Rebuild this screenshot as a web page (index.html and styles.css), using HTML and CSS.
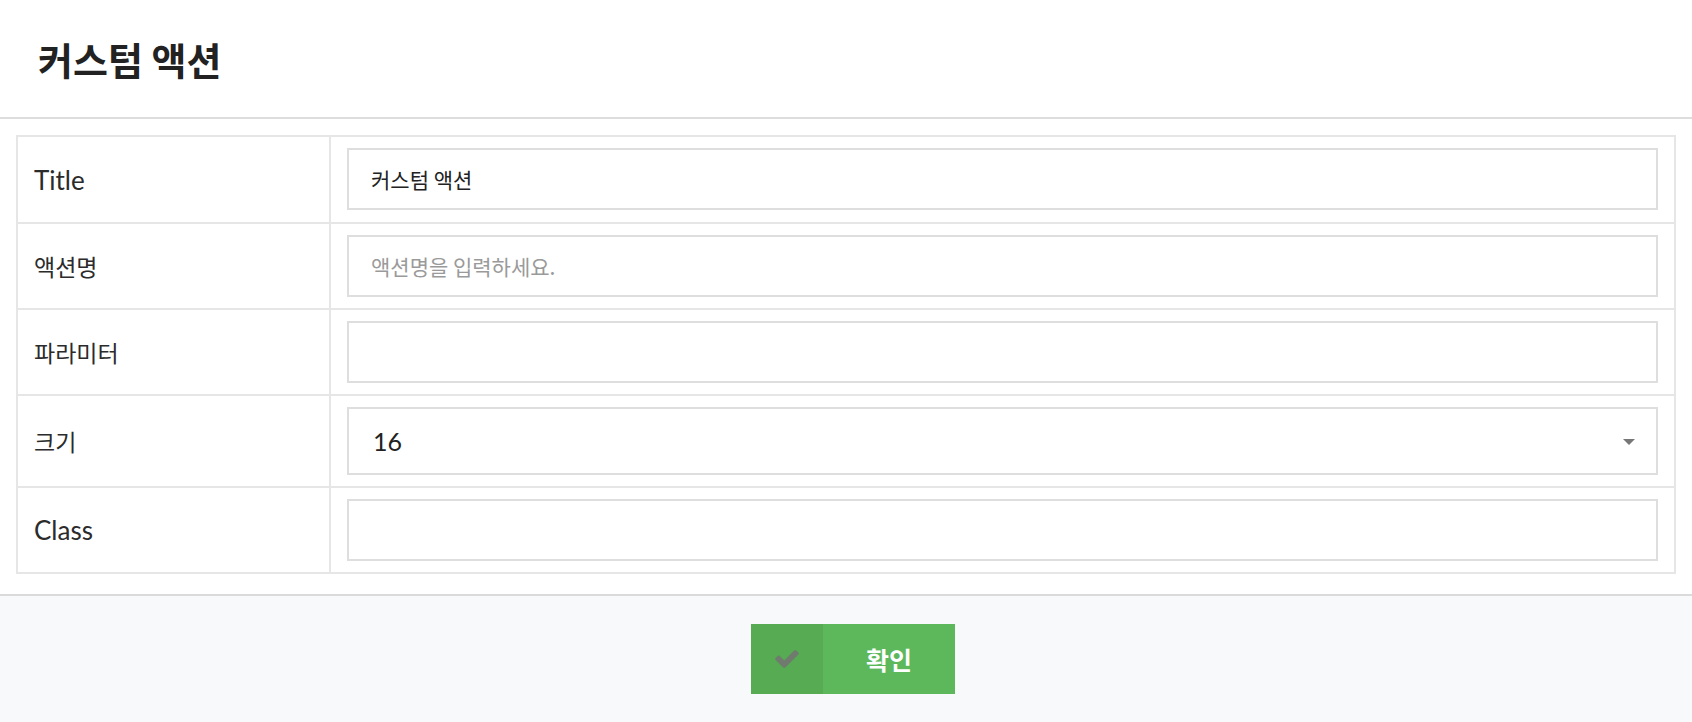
FILE: index.html
```html
<!DOCTYPE html>
<html>
<head>
    <title>커스텀 액션</title>
    <link rel="stylesheet" href="styles.css">
</head>
<body>
    <div class="header">
        <h1>커스텀 액션</h1>
    </div>

    <div class="content">
        <table class="form-table">
            <tr class="row-tall">
                <th>Title</th>
                <td><input type="text" class="field ko" value="커스텀 액션"></td>
            </tr>
            <tr>
                <th class="ko">액션명</th>
                <td><input type="text" class="field ko" placeholder="액션명을 입력하세요."></td>
            </tr>
            <tr>
                <th class="ko">파라미터</th>
                <td><input type="text" class="field"></td>
            </tr>
            <tr>
                <th class="ko">크기</th>
                <td>
                    <div class="select-wrap">
                        <select class="field select">
                            <option>16</option>
                            <option>24</option>
                            <option>32</option>
                        </select>
                    </div>
                </td>
            </tr>
            <tr>
                <th>Class</th>
                <td><input type="text" class="field"></td>
            </tr>
        </table>
    </div>

    <div class="footer">
        <button type="button" class="btn-ok">
            <span class="btn-icon">
                <svg width="24" height="18" viewBox="121 334 1550 1188">
                    <path fill="#707a6e" d="M1671 566q0 40-28 68l-724 724-136 136q-28 28-68 28t-68-28l-136-136-362-362q-28-28-28-68t28-68l136-136q28-28 68-28t68 28l294 295 656-657q28-28 68-28t68 28l136 136q28 28 28 68z"/>
                </svg>
            </span>
            <span class="btn-text">확인</span>
        </button>
    </div>
</body>
</html>
```

FILE: styles.css
```css
body {
    font-family: Lato, "Noto Sans CJK KR", sans-serif;
    margin: 0;
    padding: 0;
    color: #2b2b2b;
    background-color: #fff;
}

.header {
    height: 117px;
    padding: 0 38px;
    display: flex;
    align-items: center;
    border-bottom: 2px solid #dddddd;
}

h1 {
    margin: 0;
    font-family: "Noto Sans CJK KR", sans-serif;
    font-size: 38px;
    font-weight: 700;
    color: #222;
}

.content {
    padding: 16px 16px 20px;
}

.form-table {
    width: 100%;
    border-collapse: collapse;
    border: 2px solid #e3e3e3;
}

.form-table th,
.form-table td {
    border: 2px solid #e6e6e6;
    padding: 11px 16px;
    vertical-align: middle;
}

.form-table .row-tall td {
    padding-bottom: 12px;
}

.form-table th {
    width: 279px;
    text-align: left;
    font-weight: 400;
    font-size: 26px;
    color: #2b2b2b;
}

.form-table th.ko {
    font-family: "Noto Sans CJK KR", sans-serif;
    font-size: 23px;
}

.field {
    display: block;
    width: 100%;
    height: 62px;
    box-sizing: border-box;
    border: 2px solid #dedede;
    border-radius: 0;
    padding: 0 22px;
    font-family: Lato, "Noto Sans CJK KR", sans-serif;
    font-size: 26px;
    color: #222;
    background-color: #fff;
    outline: none;
}

.field.ko {
    font-family: "Noto Sans CJK KR", sans-serif;
    font-size: 21px;
}

.field::placeholder {
    color: #9a9a9a;
}

.select-wrap {
    position: relative;
}

.select {
    height: 68px;
    padding-left: 24px;
    font-size: 25px;
    appearance: none;
    -webkit-appearance: none;
}

.select-wrap::after {
    content: "";
    position: absolute;
    right: 23px;
    top: 32px;
    border-left: 6px solid transparent;
    border-right: 6px solid transparent;
    border-top: 6px solid #777;
    pointer-events: none;
}

.footer {
    height: 126px;
    border-top: 2px solid #dadada;
    background-color: #f8f9fb;
    display: flex;
    justify-content: center;
    align-items: center;
    padding-left: 14px;
}

.btn-ok {
    display: flex;
    height: 70px;
    padding: 0;
    border: none;
    border-radius: 0;
    background-color: #5cb85b;
    cursor: pointer;
    font-family: "Noto Sans CJK KR", sans-serif;
}

.btn-icon {
    width: 72px;
    display: flex;
    justify-content: center;
    align-items: center;
    background-color: #56ab53;
}

.btn-text {
    width: 132px;
    display: flex;
    justify-content: center;
    align-items: center;
    color: #fff;
    font-size: 25px;
    font-weight: 700;
}
```
